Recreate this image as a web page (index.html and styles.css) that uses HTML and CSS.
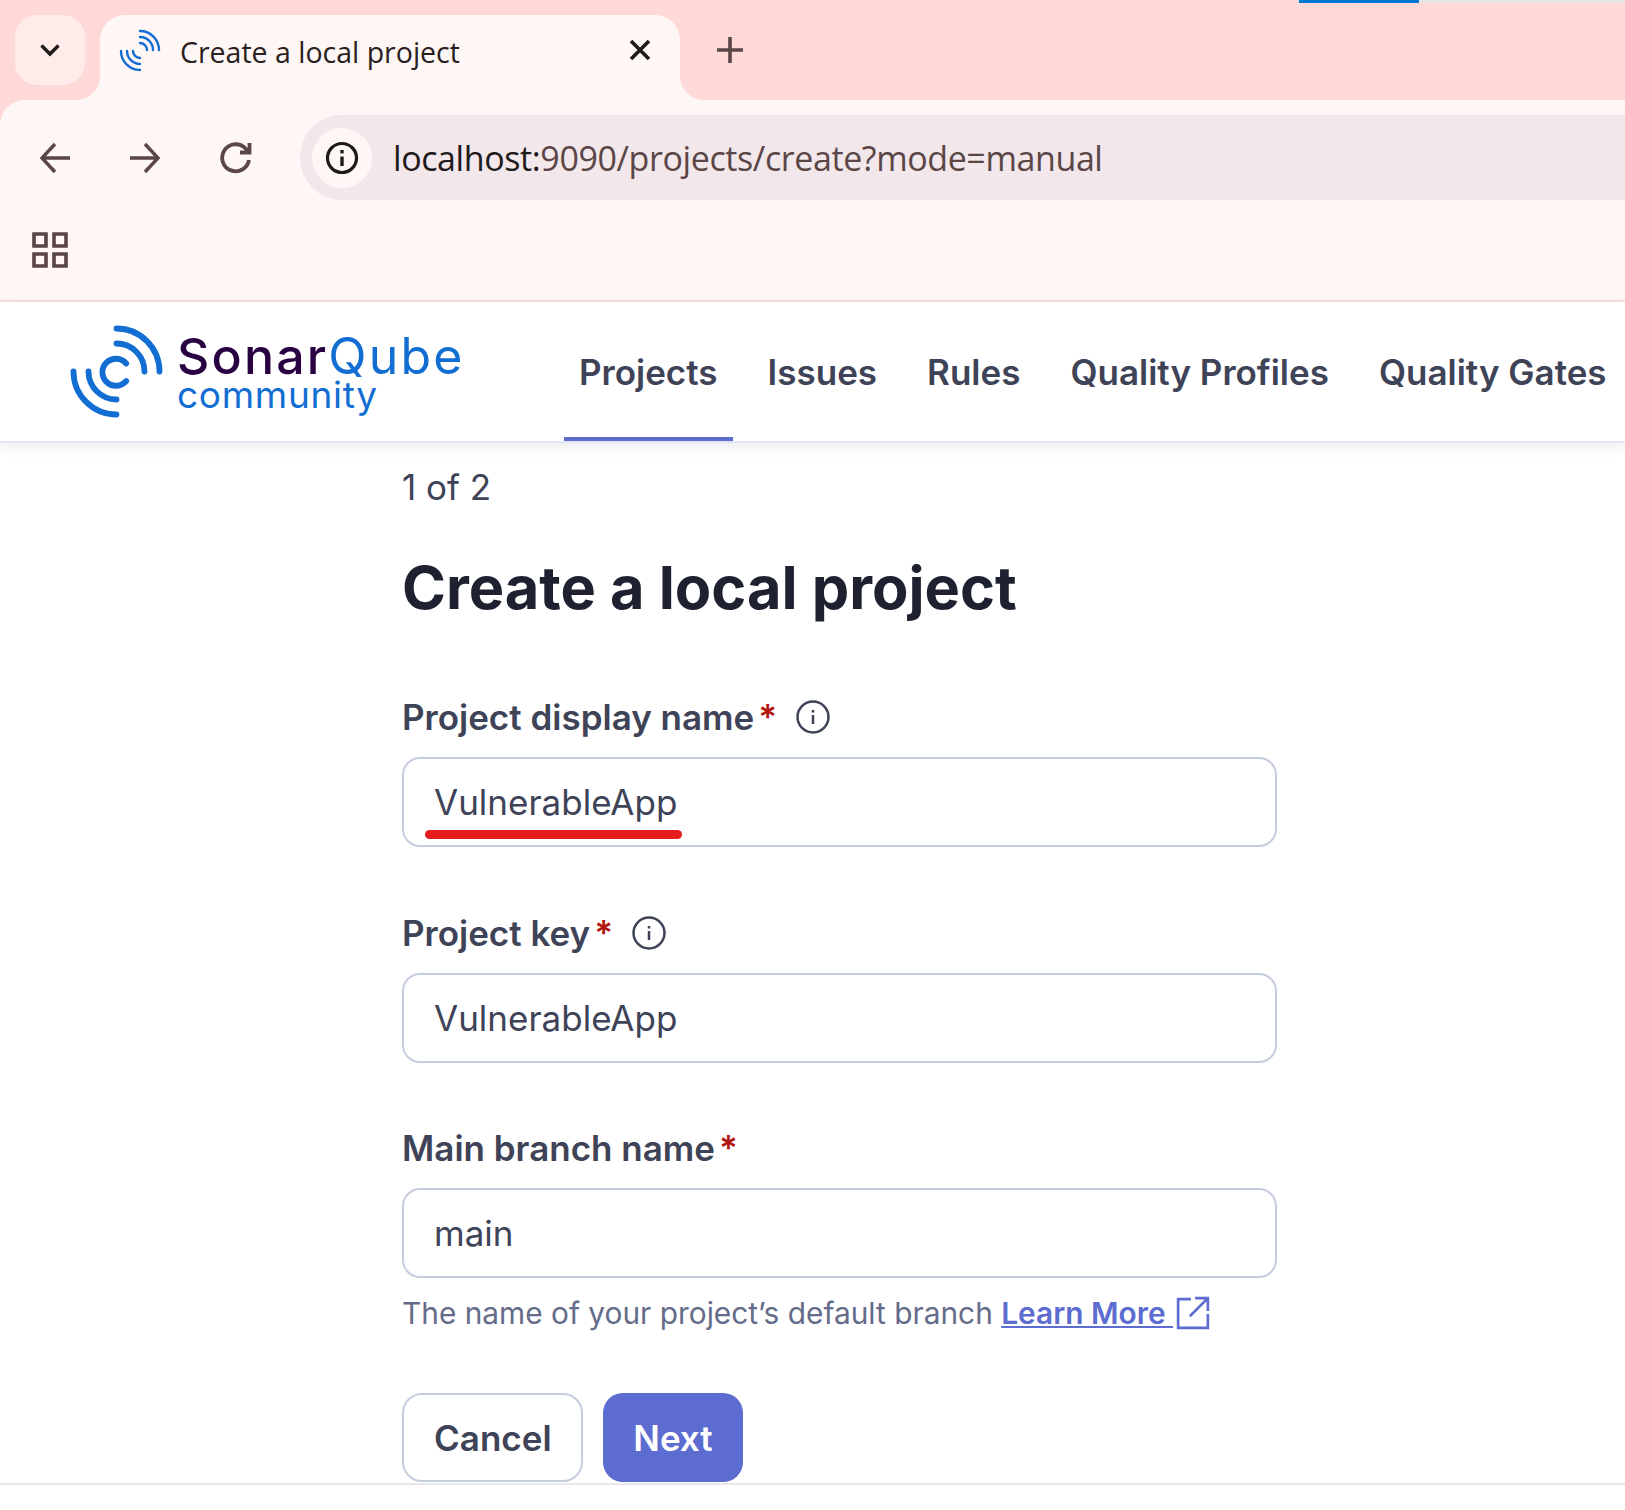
FILE: index.html
```html
<!DOCTYPE html>
<html lang="en">
<head>
    <meta charset="utf-8" />
    <link rel="stylesheet" href="styles.css">
    <title>Create a local project</title>
</head>
<body>
    <header class="chrome">
        <div class="progress"><div class="progressfill"></div></div>
        <div class="tabstrip">
            <button class="tabmenu">
                <svg width="24" height="24" viewBox="0 0 24 24" class="icon"><path d="M3.5 7.5 12 16l8.5-8.5" stroke-width="3.4"/></svg>
            </button>
            <div class="tab">
                <svg class="favicon" width="44" height="44" viewBox="0 0 44 44">
                    <g class="logoarcs" stroke-width="2.4">
                        <path d="M22 3A19 19 0 0 1 41 22"/>
                        <path d="M22 9A13 13 0 0 1 35 22"/>
                        <path d="M22 15A7 7 0 0 1 29 22"/>
                        <path d="M3 23A19 19 0 0 0 22 42"/>
                        <path d="M9 23A13 13 0 0 0 22 36"/>
                        <path d="M15 23A7 7 0 0 0 22 30"/>
                    </g>
                </svg>
                <span class="tabtitle">Create a local project</span>
                <svg class="tabclose icon" width="22" height="22" viewBox="0 0 22 22"><path d="M2 2 20 20M20 2 2 20" stroke-width="3.6"/></svg>
            </div>
            <svg class="newtab icon" width="28" height="28" viewBox="0 0 28 28"><path d="M14 1V27M1 14H27" stroke-width="3.6"/></svg>
        </div>
        <div class="toolbar">
            <div class="navbuttons">
                <svg class="icon tool" width="34" height="34" viewBox="0 0 34 34"><path d="M31 17H3M16 3 3 17l13 14" stroke-width="3.4"/></svg>
                <svg class="icon tool" width="34" height="34" viewBox="0 0 34 34"><path d="M3 17H31M18 3l13 14-13 14" stroke-width="3.4"/></svg>
                <svg class="icon tool reload" width="34" height="34" viewBox="0 0 34 34"><path d="M30 19A13.500 13.500 0 1 1 26 7L30 11M30.500 2V11.500H21" stroke-width="3.8"/></svg>
            </div>
            <div class="addressbar">
                <div class="siteinfo">
                    <svg width="34" height="34" viewBox="0 0 34 34" class="icon darkicon"><circle cx="17" cy="17" r="14.500" stroke-width="3.200"/><path d="M17 15.500V25" stroke-width="3.400"/><path d="M17 9v3.400" stroke-width="3.400"/></svg>
                </div>
                <div class="url"><span class="urlhost">localhost:</span>9090/projects/create?mode=manual</div>
            </div>
        </div>
        <div class="bookmarks">
            <svg width="36" height="36" viewBox="0 0 36 36" class="icon"><path d="M2 2h12v12H2zM22 2h12v12H22zM2 22h12v12H2zM22 22h12v12H22z" stroke-width="3.600"/></svg>
        </div>
    </header>

    <nav class="navbar">
        <div class="logo">
            <svg class="logomark" width="100" height="100" viewBox="0 0 100 100">
                <g class="logoarcs" stroke-width="5.800">
                    <path d="M49.500 6.500A43 43 0 0 1 92.500 49.500"/>
                    <path d="M49.500 21.500A28 28 0 0 1 77.500 49.500"/>
                    <path d="M59.200 41.500A13.500 13.500 0 1 0 59.200 59"/>
                    <path d="M6.500 49.500A43 43 0 0 0 49.500 92.500"/>
                    <path d="M21.500 49.500A28 28 0 0 0 49.500 77.500"/>
                </g>
            </svg>
            <div class="logotext">
                <div class="logoname"><span class="sonar">Sonar</span><span class="qube">Qube</span></div>
                <div class="logosub">community</div>
            </div>
        </div>
        <ul class="menu">
            <li class="menuitem active">Projects</li>
            <li class="menuitem">Issues</li>
            <li class="menuitem">Rules</li>
            <li class="menuitem">Quality Profiles</li>
            <li class="menuitem">Quality Gates</li>
        </ul>
    </nav>

    <main class="content">
        <div class="step">1 of 2</div>
        <h1 class="title">Create a local project</h1>

        <div class="field">
            <label class="fieldlabel">Project display name<span class="req">*</span>
                <svg class="help" width="34" height="34" viewBox="0 0 34 34"><circle cx="17" cy="17" r="15.500"/><path d="M17 15V24M17 10v2.400"/></svg>
            </label>
            <div class="inputwrap">
                <input class="textinput" type="text" value="VulnerableApp" />
                <div class="redmark"></div>
            </div>
        </div>

        <div class="field">
            <label class="fieldlabel">Project key<span class="req">*</span>
                <svg class="help" width="34" height="34" viewBox="0 0 34 34"><circle cx="17" cy="17" r="15.500"/><path d="M17 15V24M17 10v2.400"/></svg>
            </label>
            <div class="inputwrap">
                <input class="textinput" type="text" value="VulnerableApp" />
            </div>
        </div>

        <div class="field">
            <label class="fieldlabel">Main branch name<span class="req">*</span></label>
            <div class="inputwrap">
                <input class="textinput" type="text" value="main" />
            </div>
            <div class="hint">The name of your project’s default branch <a class="learn" href="#">Learn More </a><svg class="external" width="34" height="34" viewBox="0 0 32 32"><path d="M14 3H2V30H30V17M18 2H30V14M30 2 13 19"/></svg></div>
        </div>

        <div class="actions">
            <button class="btn cancel">Cancel</button>
            <button class="btn next">Next</button>
        </div>
    </main>
    <div class="footline"></div>
</body>
</html>
```

FILE: styles.css
```css
body {
    margin: 0;
    background-color: #fff;
    font-family: "Inter", "Liberation Sans", sans-serif;
    overflow: hidden;
}
.icon {
    fill: none;
    stroke: #5b4647;
}
.darkicon {
    stroke: #1f1a1a;
}
.logoarcs {
    fill: none;
    stroke: #126ed3;
    stroke-linecap: round;
}

/* browser chrome */
.chrome {
    background-color: #ffd9d8;
    height: 302px;
}
.progress {
    display: flex;
    justify-content: flex-start;
    height: 3px;
    margin-left: 1299px;
    background-color: #e6e6e6;
}
.progressfill {
    width: 120px;
    background-color: #0078d7;
}
.tabstrip {
    display: flex;
    align-items: flex-start;
    height: 97px;
    padding-top: 12px;
    box-sizing: border-box;
}
.tabmenu {
    position: relative;
    z-index: 1;
    width: 70px;
    height: 70px;
    margin-left: 15px;
    padding: 0;
    border: none;
    border-radius: 22px;
    background-color: #ffecea;
    display: flex;
    align-items: center;
    justify-content: center;
}
.tabmenu .icon {
    stroke: #1f1a1a;
}
.tab {
    position: relative;
    display: flex;
    align-items: center;
    width: 580px;
    height: 85px;
    margin-left: 15px;
    box-sizing: border-box;
    padding: 0 0 15px 18px;
    background-color: #fff7f5;
    border-radius: 25px 25px 0 0;
}
.tab::before,
.tab::after {
    content: "";
    position: absolute;
    bottom: 0;
    width: 25px;
    height: 25px;
}
.tab::before {
    left: -25px;
    background: radial-gradient(circle at 0 0, #ffd9d8 25px, #fff7f5 25.500px);
}
.tab::after {
    right: -25px;
    background: radial-gradient(circle at 100% 0, #ffd9d8 25px, #fff7f5 25.500px);
}
.tabtitle {
    margin-left: 18px;
    margin-top: 4px;
    font-family: "Open Sans", sans-serif;
    font-size: 28.500px;
    color: #2a2020;
    white-space: nowrap;
}
.tabclose {
    margin-left: auto;
    margin-right: 29px;
    stroke: #1f1a1a;
}
.newtab {
    margin: 21px 0 0 36px;
}

.toolbar {
    display: flex;
    align-items: center;
    height: 115px;
    padding: 15px 0;
    box-sizing: border-box;
    background-color: #fff7f5;
    border-top-left-radius: 25px;
}
.navbuttons {
    display: flex;
    gap: 54px;
    padding-left: 39px;
    width: 300px;
    box-sizing: border-box;
}
.reload {
    margin-left: 4px;
}
.addressbar {
    flex: 1;
    display: flex;
    align-items: center;
    height: 85px;
    padding-left: 12px;
    background-color: #f2e7ea;
    border-radius: 42px 0 0 42px;
}
.siteinfo {
    width: 60px;
    height: 60px;
    border-radius: 50%;
    background-color: #fff7f5;
    display: flex;
    align-items: center;
    justify-content: center;
}
.url {
    margin-left: 21px;
    font-family: "Open Sans", sans-serif;
    font-size: 34px;
    letter-spacing: -0.400px;
    color: #5b4647;
    white-space: nowrap;
}
.urlhost {
    color: #1f1a1a;
}
.bookmarks {
    height: 87px;
    padding: 17px 0 0 32px;
    box-sizing: border-box;
    background-color: #fff7f5;
    border-bottom: 2px solid #f3dddd;
}

/* sonarqube nav */
.navbar {
    display: flex;
    align-items: stretch;
    height: 139px;
    background-color: #fff;
    border-bottom: 2px solid #e1e4f3;
    box-shadow: 0 4px 12px rgba(80, 80, 100, 0.1);
    position: relative;
}
.logo {
    display: flex;
    align-items: center;
    flex-shrink: 0;
    width: 564px;
    padding-left: 67px;
    box-sizing: border-box;
}
.logotext {
    margin-left: 10px;
    margin-top: 6px;
}
.logoname {
    font-size: 50px;
    font-weight: 500;
    line-height: 38px;
    letter-spacing: 2.200px;
}
.sonar {
    color: #290042;
}
.qube {
    color: #126ed3;
    font-weight: 400;
}
.logosub {
    margin-top: 3px;
    font-size: 37px;
    line-height: 34px;
    letter-spacing: 0.700px;
    color: #126ed3;
}
.menu {
    display: flex;
    list-style: none;
    margin: 0;
    padding: 0;
}
.menuitem {
    display: flex;
    align-items: center;
    padding: 4px 15px 0;
    margin-right: 20px;
    font-size: 35px;
    font-weight: 600;
    color: #3e4357;
    white-space: nowrap;
    border-bottom: 4px solid transparent;
    box-sizing: border-box;
}
.menuitem.active {
    border-bottom-color: #5d6cd0;
}

/* form */
.content {
    width: 875px;
    margin-left: 402px;
}
.step {
    margin-top: 23px;
    font-size: 35px;
    line-height: 42px;
    color: #3e4357;
}
.title {
    margin: 45px 0 0 0;
    font-size: 59.500px;
    line-height: 68px;
    font-weight: 700;
    color: #1e2130;
}
.field {
    margin-top: 74px;
}
.field + .field {
    margin-top: 63.500px;
}
.fieldlabel {
    display: flex;
    align-items: center;
    height: 44px;
    margin-bottom: 18px;
    font-size: 35px;
    font-weight: 600;
    color: #3e4357;
}
.req {
    margin-left: 4px;
    color: #b3150f;
}
.help {
    margin-left: 19px;
    fill: none;
    stroke: #3e4357;
    stroke-width: 2.500;
}
.inputwrap {
    position: relative;
}
.textinput {
    display: block;
    width: 100%;
    height: 90px;
    box-sizing: border-box;
    padding: 0 30px;
    border: 2px solid #c5cdde;
    border-radius: 18px;
    font-family: inherit;
    font-size: 35px;
    color: #3e4357;
    background-color: #fff;
    outline: none;
}
.redmark {
    position: absolute;
    left: 23px;
    top: 73px;
    width: 257px;
    height: 9px;
    border-radius: 5px;
    background-color: #e61c1c;
}
.hint {
    display: flex;
    align-items: center;
    margin-top: 15px;
    font-size: 29.850px;
    line-height: 40px;
    color: #646c8a;
    white-space: pre;
}
.learn {
    color: #5d6cd0;
    font-weight: 600;
}
.external {
    margin-left: 3px;
    fill: none;
    stroke: #5d6cd0;
    stroke-width: 2.500;
}
.actions {
    display: flex;
    gap: 20px;
    margin-top: 60px;
}
.btn {
    height: 89px;
    padding: 0 30px;
    border-radius: 20px;
    font-family: inherit;
    font-size: 35px;
    font-weight: 600;
}
.cancel {
    width: 181px;
    border: 2px solid #c5cdde;
    background-color: #fff;
    color: #3e4357;
}
.next {
    width: 140px;
    border: none;
    background-color: #5d6cd0;
    color: #fff;
}
.footline {
    height: 2px;
    margin-top: 1px;
    background-color: #e8e8ec;
}
```
